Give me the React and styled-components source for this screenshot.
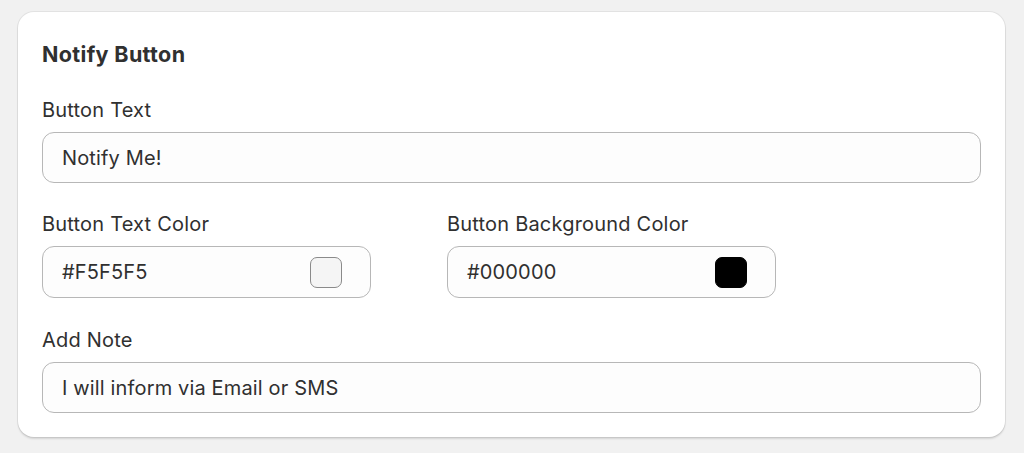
import styled, { createGlobalStyle } from "styled-components";

const GlobalStyle = createGlobalStyle`
  html, body {
    margin: 0;
    background: #f1f1f1;
    font-family: Inter, "Liberation Sans", sans-serif;
    color: #303030;
  }
`;

const Page = styled.div`
  padding: 12px 19px 16px 18px;
`;

const Card = styled.section`
  background: #fff;
  border-radius: 16px;
  box-shadow: 0 0 0 1px rgba(0, 0, 0, 0.06), 0 2px 2px rgba(0, 0, 0, 0.12);
  padding: 28px 24px 24px;
  display: flex;
  flex-direction: column;
  gap: 30px;
`;

const Title = styled.h2`
  margin: 0;
  font-size: 21.5px;
  font-weight: 650;
  line-height: 28px;
  letter-spacing: 0.35px;
  color: #303030;
`;

const Field = styled.div`
  display: flex;
  flex-direction: column;
  gap: 10px;
  width: ${(p) => (p.narrow ? "329px" : "auto")};
`;

const Row = styled.div`
  display: flex;
  gap: 76px;
  margin-top: -1px;
`;

const Label = styled.label`
  font-size: 20px;
  line-height: 24px;
  letter-spacing: 0.2px;
  color: #303030;
`;

const InputBox = styled.div`
  height: ${(p) => (p.tall ? "52px" : "51px")};
  box-sizing: border-box;
  border: 1px solid #b7b7b7;
  border-radius: 12px;
  background: #fdfdfd;
  display: flex;
  align-items: center;
  justify-content: space-between;
  padding: 0 28px 0 19px;
  font-size: 20px;
  letter-spacing: 0.15px;
  color: #303030;
`;

const Swatch = styled.span`
  width: 32px;
  height: 31px;
  box-sizing: border-box;
  border-radius: 7px;
  background: ${(p) => p.color};
  border: 1.5px solid ${(p) => (p.color === "#000000" ? "#000" : "#8a8a8a")};
`;

const ColorField = ({ label, value }) => (
  <Field narrow>
    <Label>{label}</Label>
    <InputBox tall>
      <span>{value}</span>
      <Swatch color={value} />
    </InputBox>
  </Field>
);

const App = () => (
  <>
    <GlobalStyle />
    <Page>
      <Card>
        <Title>Notify Button</Title>
        <Field>
          <Label>Button Text</Label>
          <InputBox>Notify Me!</InputBox>
        </Field>
        <Row>
          <ColorField label="Button Text Color" value="#F5F5F5" />
          <ColorField label="Button Background Color" value="#000000" />
        </Row>
        <Field>
          <Label>Add Note</Label>
          <InputBox>I will inform via Email or SMS</InputBox>
        </Field>
      </Card>
    </Page>
  </>
);

export default App;
